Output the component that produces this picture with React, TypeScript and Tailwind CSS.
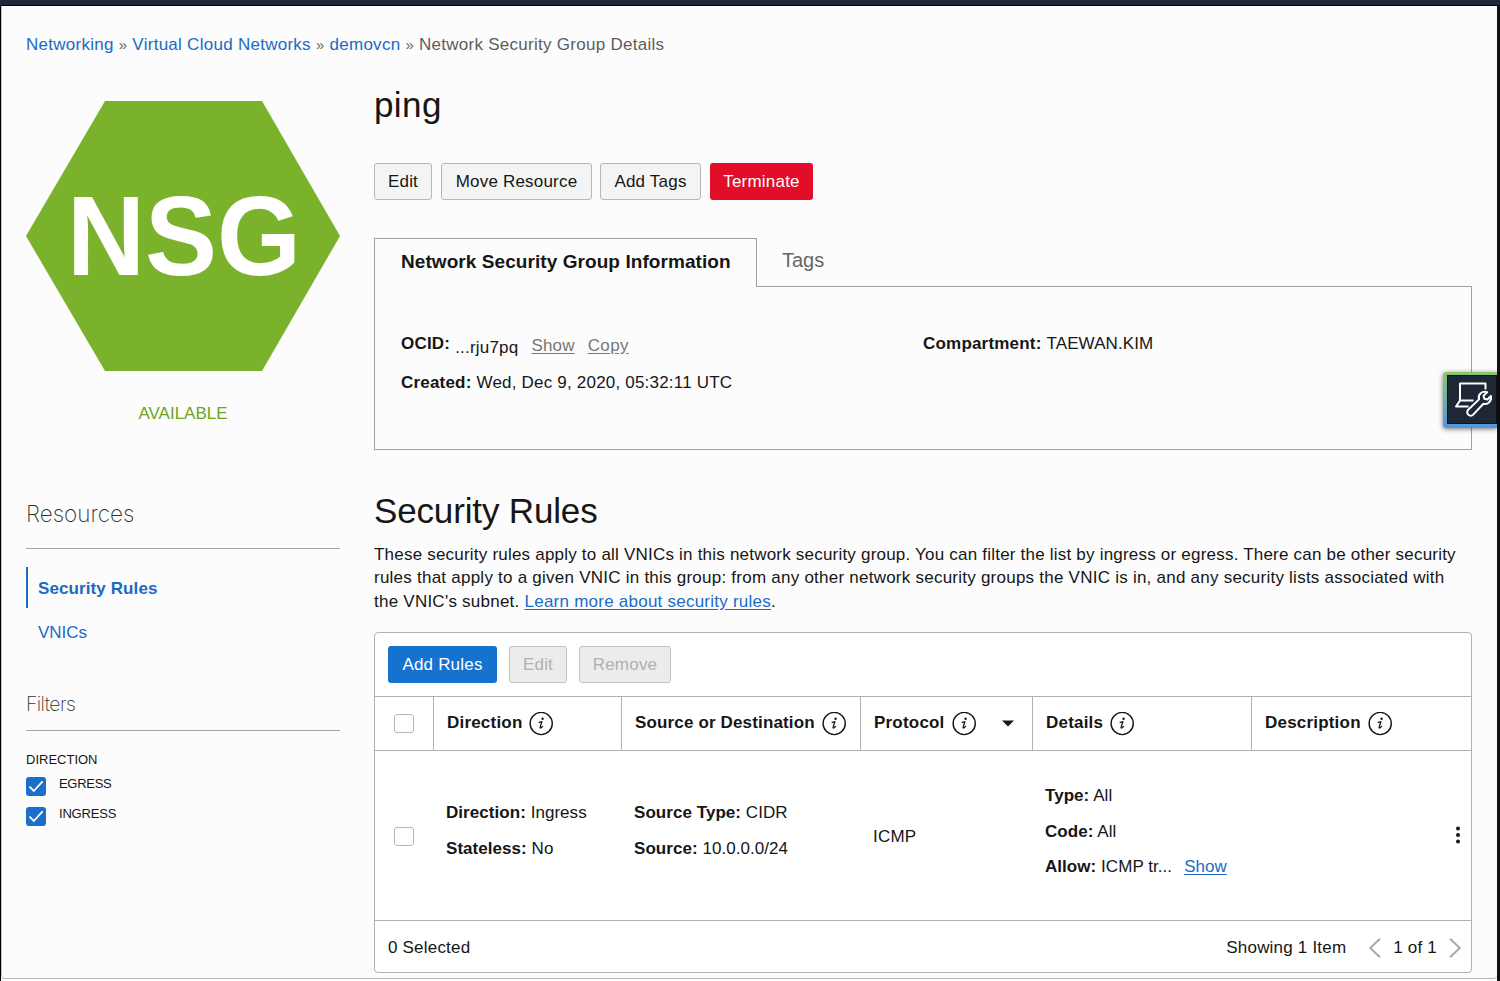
import React from "react";

type Kids = { children?: React.ReactNode };

function InfoIcon() {
  return (
    <svg width="24" height="24" viewBox="0 0 24 24" className="shrink-0">
      <circle cx="12.2" cy="11.5" r="11.1" fill="none" stroke="#161616" strokeWidth="1.4" />
      <circle cx="13.6" cy="6.8" r="1.2" fill="#161616" />
      <path
        d="M10.1 10.4C10.9 10.2 11.9 9.9 12.9 9.6L11.2 15C10.8 16.5 11.8 16.6 13.6 14.4"
        fill="none"
        stroke="#161616"
        strokeWidth="1.25"
        strokeLinecap="round"
        strokeLinejoin="round"
      />
    </svg>
  );
}

function Checked() {
  return (
    <span className="flex h-[19px] w-[20px] shrink-0 items-center justify-center rounded-[3px] bg-[#1a6fca]">
      <svg width="16" height="14" viewBox="0 0 16 14">
        <path d="M1.5 6.6 5.8 11 14.6 1.4" fill="none" stroke="#fff" strokeWidth="1.8" />
      </svg>
    </span>
  );
}

function Box() {
  return <span className="block h-[19px] w-[20px] shrink-0 rounded-[3px] border-[1.5px] border-[#b3b6ba] bg-white" />;
}

function Button({ children, className }: Kids & { className: string }) {
  return (
    <button className={`flex h-[37px] items-center justify-center rounded-[3px] pt-px whitespace-nowrap ${className}`}>
      {children}
    </button>
  );
}

function HeadCell({ label, className, children }: Kids & { label: React.ReactNode; className: string }) {
  return (
    <div className={`flex h-full items-center gap-[7px] border-[#aeb2b9] pl-[13px] font-bold ${className}`}>
      <span className="pb-[2px]">{label}</span>
      <InfoIcon />
      {children}
    </div>
  );
}

function Pair({ name, children }: Kids & { name: string }) {
  return (
    <div className="h-[35.7px] leading-[35.7px] tracking-[0.05px] whitespace-nowrap">
      <b>{name}</b> {children}
    </div>
  );
}

function Sidebar() {
  return (
    <aside className="w-[314px] shrink-0">
      <svg width="314" height="270" viewBox="0 0 314 270" className="mt-[17px] block">
        <polygon points="0,135 79,0 236,0 314,135 236,270 79,270" fill="#7ab22b" />
        <text
          transform="translate(41 174) scale(1 1.055)"
          fontSize="108"
          fontWeight="700"
          fontFamily="Liberation Sans, Arial, sans-serif"
          letterSpacing="0"
          fill="#fff"
        >
          NSG
        </text>
      </svg>
      <div className="mt-[30px] h-[24px] text-center leading-[25px] tracking-[0px] text-[#6da51f]">AVAILABLE</div>

      <h2 className="mt-[73px] h-[51px] border-b border-[#a3a6aa] font-['Inter'] text-[22.5px] leading-[31px] font-extralight tracking-[0px] text-[#333]">
        Resources
      </h2>
      <div className="mt-[18px] h-[41px] border-l-2 border-[#1a6bc4] pl-[10px] leading-[43px] font-bold tracking-[0.1px] text-[#1a6bc4]">
        Security Rules
      </div>
      <div className="mt-[12px] h-[24px] pl-[12px] leading-[25px] tracking-[0px] text-[#1a6bc4]">VNICs</div>

      <h2 className="mt-[45px] h-[42px] border-b border-[#a3a6aa] font-['Inter'] text-[19.5px] leading-[30px] font-extralight tracking-[-0.6px] text-[#333]">
        Filters
      </h2>
      <div className="mt-[18px] h-[20px] text-[13px] leading-[21px] tracking-[0px]">DIRECTION</div>
      <div className="mt-[8px] flex h-[20px] gap-[13px] text-[13px]">
        <Checked />
        <span className="h-[14px] leading-[14px] tracking-[-0.3px]">EGRESS</span>
      </div>
      <div className="mt-[10px] flex h-[20px] gap-[13px] text-[13px]">
        <Checked />
        <span className="h-[14px] leading-[14px] tracking-[-0.2px]">INGRESS</span>
      </div>
    </aside>
  );
}

function InfoPanel() {
  return (
    <section className="mt-[38px]">
      <div className="flex h-[49px]">
        <div className="w-[383px] border-t border-r border-l border-[#a0a0a0] pl-[26px] text-[19px] leading-[46px] font-bold tracking-[0.07px] whitespace-nowrap">
          Network Security Group Information
        </div>
        <div className="flex-1 border-b border-[#a0a0a0] pl-[25px] text-[20px] leading-[45px] tracking-[0px] text-[#666]">
          Tags
        </div>
      </div>
      <div className="flex h-[163px] border-r border-b border-l border-[#a0a0a0] pt-[37px] pl-[26px]">
        <div className="w-[522px]">
          <div className="flex h-[39px] items-center leading-[39px] whitespace-nowrap">
            <b>OCID:</b>
            <span className="ml-[5px] pt-[7px]">...rju7pq</span>
            <span className="ml-[13px] pt-[3px] text-[#777] underline underline-offset-2">Show</span>
            <span className="ml-[13px] pt-[3px] tracking-[0.35px] text-[#777] underline underline-offset-2">Copy</span>
          </div>
          <div className="h-[39px] leading-[39px] whitespace-nowrap">
            <b>Created:</b> Wed, Dec 9, 2020, 05:32:11 UTC
          </div>
        </div>
        <div className="h-[39px] leading-[39px]">
          <b>Compartment:</b> <span className="tracking-[0.1px]">TAEWAN.KIM</span>
        </div>
      </div>
    </section>
  );
}

function RulesTable() {
  return (
    <div className="mt-[19px] h-[341px] rounded-[4px] border border-[#aeb2b9] bg-white">
      <div className="flex h-[64px] items-center border-b border-[#aeb2b9] pl-[13px]">
        <Button className="w-[109px] bg-[#1672cf] text-white">Add Rules</Button>
        <Button className="ml-[12px] w-[58px] border-[1.5px] border-[#bfc1c5] bg-[#ececec] text-[#b0b0b0]">Edit</Button>
        <Button className="ml-[12px] w-[92px] border-[1.5px] border-[#bfc1c5] bg-[#ececec] text-[#b0b0b0]">Remove</Button>
      </div>
      <div className="flex h-[54px] items-center border-b border-[#aeb2b9]">
        <div className="flex h-full w-[59px] items-center border-r border-[#aeb2b9] pl-[19px]">
          <Box />
        </div>
        <HeadCell label="Direction" className="w-[188px] border-r" />
        <HeadCell label="Source or Destination" className="w-[239px] border-r tracking-[0.15px] whitespace-nowrap" />
        <HeadCell label="Protocol" className="w-[172px] border-r">
          <svg width="12" height="7" viewBox="0 0 12 7" className="ml-[19px]">
            <path d="M0 0.5h12L6 6.5z" fill="#161616" />
          </svg>
        </HeadCell>
        <HeadCell label="Details" className="w-[219px] border-r" />
        <HeadCell label="Description" className="flex-1" />
      </div>
      <div className="flex h-[170px] items-center border-b border-[#aeb2b9]">
        <div className="w-[71px] pt-[2px] pl-[19px]">
          <Box />
        </div>
        <div className="w-[188px] pb-[10px]">
          <Pair name="Direction:">Ingress</Pair>
          <Pair name="Stateless:">No</Pair>
        </div>
        <div className="w-[239px] pb-[10px]">
          <Pair name="Source Type:">CIDR</Pair>
          <Pair name="Source:">10.0.0.0/24</Pair>
        </div>
        <div className="w-[172px] pt-[3px]">ICMP</div>
        <div className="w-[219px] pb-[8px]">
          <Pair name="Type:">All</Pair>
          <Pair name="Code:">All</Pair>
          <Pair name="Allow:">
            ICMP tr...<span className="ml-[12px] text-[#1a6bc4] underline underline-offset-2">Show</span>
          </Pair>
        </div>
        <svg width="6" height="18" viewBox="0 0 6 18" className="mr-[10px] mb-[2px] ml-auto">
          <circle cx="3" cy="2.4" r="2" fill="#161616" />
          <circle cx="3" cy="9" r="2" fill="#161616" />
          <circle cx="3" cy="15.6" r="2" fill="#161616" />
        </svg>
      </div>
      <div className="flex h-[51px] items-center justify-between pt-[2px] pr-[10px] pl-[13px]">
        <span>0 Selected</span>
        <div className="flex items-center">
          <span>Showing 1 Item</span>
          <svg width="12" height="20" viewBox="0 0 12 20" className="mt-px ml-[23px]">
            <path d="M11 0.8 1.2 10 11 19.2" fill="none" stroke="#a9a9a9" strokeWidth="2" />
          </svg>
          <span className="ml-[12px]">1 of 1</span>
          <svg width="12" height="20" viewBox="0 0 12 20" className="mt-px ml-[12px]">
            <path d="M1 0.8 10.8 10 1 19.2" fill="none" stroke="#a9a9a9" strokeWidth="2" />
          </svg>
        </div>
      </div>
    </div>
  );
}

function SupportTab() {
  return (
    <div className="absolute top-[372px] right-[3px] h-[56px] w-[54px] rounded-l-[3px] bg-linear-to-b from-[#8cc665] to-[#4f96dd] pt-[3px] pb-[4px] pl-[4px] shadow-[0_1px_5px_rgba(0,0,0,0.55)]">
      <div className="flex h-full w-full items-center justify-center border border-[#0d1420] bg-[#1d2735]">
        <svg width="42" height="38" viewBox="0 0 42 38" fill="none" stroke="#fff" strokeWidth="2" strokeLinejoin="round">
          <path d="M34.5 8.5V2.5H9V19.5L5 25.5H17.5M9 19.5H22.5" />
          <path d="M36.2 11.2 32.5 14.8 33.3 17.8 36.4 18.5 39.9 15C40.9 20 37 24 32.4 22.8L22.2 33.6A3.5 3.5 0 0 1 17.2 28.7L28 18.4C26.6 13.4 31 9.6 36.2 11.2Z" />
        </svg>
      </div>
    </div>
  );
}

export default function App() {
  return (
    <div className="relative flex h-[981px] w-[1500px] flex-col overflow-hidden bg-[#fcfcfc] font-['Liberation_Sans',Arial,sans-serif] text-[17px] tracking-[0.2px] text-[#161616]">
      <div className="h-[6px] shrink-0 border-b border-black bg-[#1f2937]" />
      <div className="flex min-h-0 flex-1 flex-col border-r-[3px] border-l border-black border-r-[#101012]">
        <div className="flex h-[973px] flex-col rounded-b-[4px] border-b border-l border-l-[#c8c8c8] border-b-[#b8b8b8] pr-[25px] pl-[24px]">
          <nav className="mt-[26px] h-[24px] shrink-0 leading-[25px] tracking-[0.27px] whitespace-nowrap text-[#1a6bc4]">
            Networking <span className="text-[15px] text-[#666]">»</span> Virtual Cloud Networks{" "}
            <span className="text-[15px] text-[#666]">»</span> demovcn{" "}
            <span className="text-[15px] text-[#666]">»</span>{" "}
            <span className="text-[#5c5c5c]">Network Security Group Details</span>
          </nav>
          <div className="mt-[28px] flex gap-[34px]">
            <Sidebar />
            <main className="w-[1098px]">
              <h1 className="h-[40px] text-[35px] leading-[42px] tracking-[0.4px]">ping</h1>
              <div className="mt-[39px] flex">
                <Button className="w-[58px] border-[1.5px] border-[#b4b7bd] bg-[#f4f4f5]">Edit</Button>
                <Button className="ml-[9px] w-[151px] border-[1.5px] border-[#b4b7bd] bg-[#f4f4f5]">Move Resource</Button>
                <Button className="ml-[8px] w-[101px] border-[1.5px] border-[#b4b7bd] bg-[#f4f4f5]">Add Tags</Button>
                <Button className="ml-[9px] w-[103px] bg-[#e20d28] text-white">Terminate</Button>
              </div>
              <InfoPanel />
              <h1 className="mt-[41px] h-[40px] text-[35px] leading-[40px] tracking-[-0.15px]">Security Rules</h1>
              <p className="mt-[12px] h-[70px] leading-[23.4px] tracking-[0.21px] whitespace-nowrap">
                These security rules apply to all VNICs in this network security group. You can filter the list by ingress or egress. There can be other security
                <br />
                <span className="tracking-[0.24px]">
                  rules that apply to a given VNIC in this group: from any other network security groups the VNIC is in, and any security lists associated with
                </span>
                <br />
                <span className="tracking-[0.24px]">
                  the VNIC's subnet. <span className="text-[#1a6bc4] underline underline-offset-2">Learn more about security rules</span>.
                </span>
              </p>
              <RulesTable />
            </main>
          </div>
        </div>
      </div>
      <SupportTab />
    </div>
  );
}
